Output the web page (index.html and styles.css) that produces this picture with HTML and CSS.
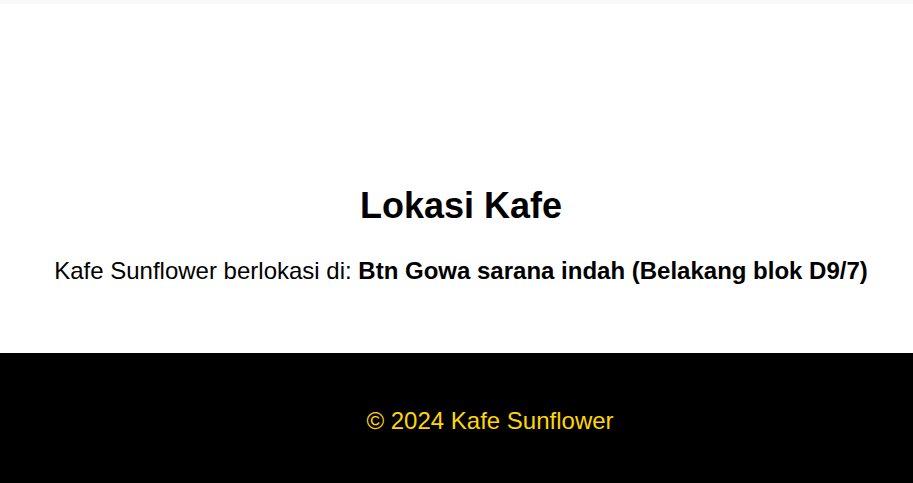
FILE: index.html
```html
<!DOCTYPE html>
<html lang="id">
<head>
<meta charset="utf-8">
<title>Lokasi Kafe</title>
<link rel="stylesheet" href="styles.css">
</head>
<body>
<div class="topbar"></div>
<main class="content">
  <h1 class="title">Lokasi Kafe</h1>
  <p class="address">Kafe Sunflower berlokasi di: <strong>Btn Gowa sarana indah (Belakang blok D9/7)</strong></p>
</main>
<footer class="footer">
  <p class="copy">&copy; 2024 Kafe Sunflower</p>
</footer>
</body>
</html>
```
FILE: styles.css
```css
html, body {
  margin: 0;
  padding: 0;
}
body {
  background: #ffffff;
  font-family: "Liberation Sans", Arial, sans-serif;
  color: #000;
}
.topbar {
  height: 4px;
  background: #f8f8f8;
}
.content {
  display: flex;
  flex-direction: column;
  align-items: center;
  padding: 181px 0 0 9px;
  height: 168px;
}
.title {
  margin: 0;
  font-size: 36px;
  font-weight: bold;
  line-height: 41px;
}
.address {
  margin: 31px 0 0;
  font-size: 24px;
  line-height: 28px;
}
.address strong {
  font-weight: bold;
}
.footer {
  background: #000;
  height: 130px;
  box-sizing: border-box;
  padding: 54px 0 0 67px;
  text-align: center;
}
.copy {
  margin: 0;
  font-size: 24px;
  line-height: 28px;
  color: #ffd700;
}
```
